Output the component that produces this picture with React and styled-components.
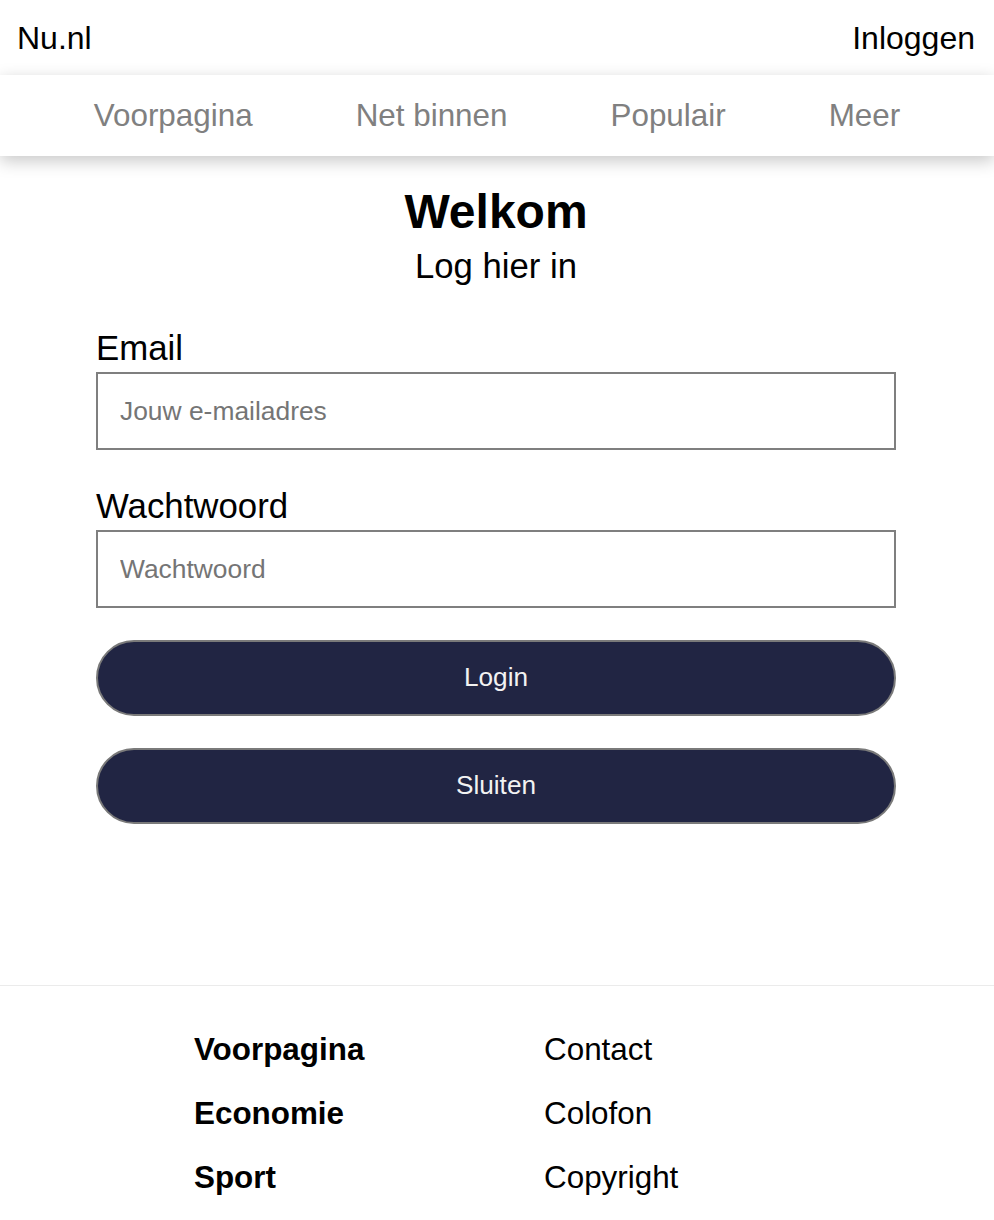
import React from "react";
import styled, { createGlobalStyle } from "styled-components";

const GlobalStyle = createGlobalStyle`
  html, body {
    margin: 0;
    padding: 0;
    background: #ffffff;
    font-family: "Liberation Sans", Arial, Helvetica, sans-serif;
    color: #000000;
  }
  * { box-sizing: border-box; }
`;

const TopBar = styled.header`
  height: 75px;
  display: flex;
  align-items: center;
  justify-content: space-between;
  padding: 0 19px 0 17px;
  font-size: 32px;
`;

const TopLink = styled.a`
  color: #000;
  text-decoration: none;
  line-height: 1;
`;

const NavBar = styled.nav`
  position: relative;
  height: 81px;
  display: flex;
  align-items: center;
  justify-content: center;
  gap: 103px;
  background: #fff;
  box-shadow: 0 5px 16px rgba(0, 0, 0, 0.22);
`;

const NavItem = styled.a`
  font-size: 31.4px;
  color: #808080;
  text-decoration: none;
`;

const Main = styled.main`
  width: 800px;
  margin: 0 98px 0 96px;
  padding: 28px 0 161px;
  display: flex;
  flex-direction: column;
`;

const Title = styled.h1`
  margin: 0;
  font-size: 48px;
  line-height: 56px;
  font-weight: 700;
  text-align: center;
`;

const Subtitle = styled.p`
  margin: 6px 0 0;
  font-size: 34.7px;
  line-height: 40px;
  text-align: center;
`;

const Label = styled.label`
  display: block;
  margin-top: ${(p) => p.$top}px;
  font-size: 34.8px;
  line-height: 40px;
`;

const Input = styled.input`
  display: block;
  width: 100%;
  height: 78px;
  margin-top: 4px;
  padding: 0 22px;
  border: 2px solid #7f7f7f;
  border-radius: 0;
  font-family: inherit;
  font-size: 26.4px;
  color: #000;
  background: #fff;
  outline: none;
  &::placeholder {
    color: #757575;
  }
`;

const Button = styled.button`
  display: block;
  width: 100%;
  height: 76px;
  margin-top: 32px;
  padding: 0 0 2px;
  border: 2px solid #7a7a7a;
  border-radius: 38px;
  background: #212543;
  color: #f2f2f2;
  font-family: inherit;
  font-size: 26.2px;
  cursor: pointer;
`;

const Footer = styled.footer`
  border-top: 1px solid #ebebeb;
  padding-top: 32px;
  display: flex;
  justify-content: center;
`;

const FooterColumn = styled.ul`
  list-style: none;
  margin: 0;
  padding: 0 0 0 47px;
  width: 350px;
`;

const FooterItem = styled.li`
  font-size: 31.4px;
  line-height: 64px;
  font-weight: ${(p) => (p.$bold ? 700 : 400)};
`;

export default function App() {
  return (
    <>
      <GlobalStyle />
      <TopBar>
        <TopLink href="#">Nu.nl</TopLink>
        <TopLink href="#">Inloggen</TopLink>
      </TopBar>
      <NavBar>
        <NavItem href="#">Voorpagina</NavItem>
        <NavItem href="#">Net binnen</NavItem>
        <NavItem href="#">Populair</NavItem>
        <NavItem href="#">Meer</NavItem>
      </NavBar>
      <Main>
        <Title>Welkom</Title>
        <Subtitle>Log hier in</Subtitle>
        <Label $top={42} htmlFor="email">Email</Label>
        <Input id="email" type="email" placeholder="Jouw e-mailadres" />
        <Label $top={36} htmlFor="pw">Wachtwoord</Label>
        <Input id="pw" type="password" placeholder="Wachtwoord" />
        <Button type="button">Login</Button>
        <Button type="button">Sluiten</Button>
      </Main>
      <Footer>
        <FooterColumn>
          <FooterItem $bold>Voorpagina</FooterItem>
          <FooterItem $bold>Economie</FooterItem>
          <FooterItem $bold>Sport</FooterItem>
        </FooterColumn>
        <FooterColumn>
          <FooterItem>Contact</FooterItem>
          <FooterItem>Colofon</FooterItem>
          <FooterItem>Copyright</FooterItem>
        </FooterColumn>
      </Footer>
    </>
  );
}
